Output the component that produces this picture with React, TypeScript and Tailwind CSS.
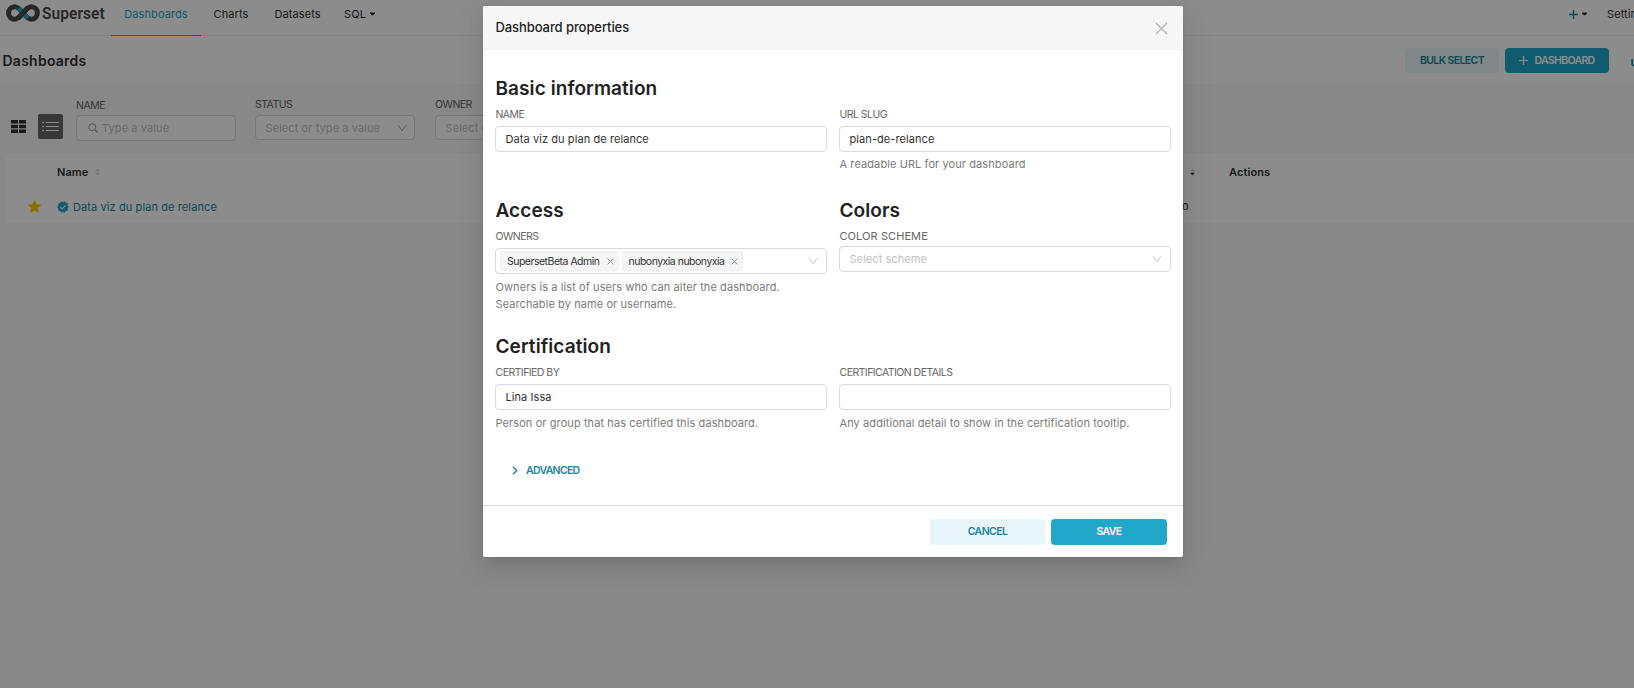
import React from "react";

type Kids = { children?: React.ReactNode };

const Caret = ({ className = "" }: { className?: string }) => (
  <svg width="5" height="4" viewBox="0 0 5 4" className={className}>
    <path d="M0 .5h5v.8L3.2 3.3H1.8L0 1.3z" fill="currentColor" />
  </svg>
);

const Sorter = ({ up, down }: { up: string; down: string }) => (
  <svg width="5" height="8" viewBox="0 0 6 9" className="shrink-0">
    <path d="M3 .7 5.2 3.2H.8z" fill={up} stroke={up} strokeWidth=".6" />
    <path d="M3 8.2 5.2 5.7H.8z" fill={down} stroke={down} strokeWidth=".6" />
  </svg>
);

const ChevronDown = ({ color = "#bfbfbf" }: { color?: string }) => (
  <svg width="10" height="8" viewBox="0 0 10 8" className="shrink-0">
    <path d="M1 1.2 5 6.6 9 1.2" fill="none" stroke={color} strokeWidth="1" />
  </svg>
);

const Logo = () => (
  <svg width="34" height="18" viewBox="0 0 34 18" className="shrink-0">
    <path
      d="M17 9C13.8 5.2 11.6 2.8 8.8 2.8a6.2 6.2 0 0 0 0 12.4C11.6 15.2 13.8 12.8 17 9S22.4 2.8 25.2 2.8a6.2 6.2 0 0 1 0 12.4C22.4 15.2 20.2 12.8 17 9z"
      fill="none"
      stroke="#484848"
      strokeWidth="5"
    />
    <path d="M12.4 4.1 15.4 7.3" stroke="#20a7c9" strokeWidth="5" />
    <path d="M18.6 10.7 21.8 14.1" stroke="#20a7c9" strokeWidth="5" />
    <path d="M12.2 14.2 21.8 3.8" stroke="#484848" strokeWidth="5" />
  </svg>
);

const FilterLabel = ({ children }: Kids) => (
  <div className="h-[14px] text-[10.5px] leading-[16px] tracking-[-0.5px] text-[#666666]">{children}</div>
);

const Label = ({ children }: Kids) => (
  <div className="mt-[4px] h-[20px] pl-[0.5px] text-[10.5px] leading-[17px] tracking-[-0.54px] text-[#666666]">{children}</div>
);

const Heading = ({ children }: Kids) => (
  <h2 className="h-[28px] pl-[0.5px] text-[19px] font-semibold leading-[30px] tracking-[0.08px] text-[#222222]">{children}</h2>
);

const Help = ({ children }: Kids) => (
  <p className="pl-[0.5px] pt-[5px] text-[11px] leading-[17px] tracking-[0.09px] text-[#7a7a7a]">{children}</p>
);

const Field = ({ children }: Kids) => (
  <div className="flex h-[26px] w-full items-center rounded-[4px] border border-[#d9d9e5] bg-white px-[9.5px] text-[11px] tracking-[0.08px] text-[#333333]">
    {children}
  </div>
);

const Tag = ({ children }: Kids) => (
  <span className="flex h-[20px] items-center gap-[7px] rounded-[2px] border border-[#f0f0f0] bg-[#f5f5f5] pl-[6px] pr-[4px] text-[10.5px] tracking-[-0.5px] text-[#333333]">
    <span className="pt-px">{children}</span>
    <svg width="7" height="7" viewBox="0 0 7 7">
      <path d="M.6.6l5.8 5.8M6.4.6.6 6.4" stroke="#808080" strokeWidth=".9" />
    </svg>
  </span>
);

function Background() {
  return (
    <div className="h-full w-[1700px] bg-[#f7f7f7]">
      <nav className="flex h-[36px] border-b border-[#f0f0f0] bg-white text-[11px] leading-[28px] tracking-[0.09px] text-[#333333]">
        <div className="flex h-[26px] w-[111px] items-center pl-[6px]">
          <Logo />
          <span className="ml-[2px] w-[65px] origin-left scale-x-[0.91] font-['Roboto'] text-[17px] font-semibold text-[#484848]">
            Superset
          </span>
        </div>
        <div className="h-[36px] w-[90px] border-b border-[#20a7c9] text-center text-[#20a7c9]">Dashboards</div>
        <div className="ml-[12.5px] w-[50px]">Charts</div>
        <div className="ml-[11px] w-[60px]">Datasets</div>
        <div className="ml-[9.5px] flex h-[28px] w-[34px] items-center gap-[4px]">
          SQL <Caret />
        </div>
        <div className="ml-[1191px] flex h-[28px] items-center gap-[4px]">
          <svg width="9" height="9" viewBox="0 0 9 9">
            <path d="M4.5 0v9M0 4.5h9" stroke="#1a85a0" strokeWidth="1.4" />
          </svg>
          <Caret />
        </div>
        <div className="ml-[20px]">Settings</div>
      </nav>

      <div className="flex h-[48px] bg-white">
        <div className="w-[1405px] pl-[2.5px] text-[14px] font-semibold leading-[50px] tracking-[0.25px] text-[#323232]">
          Dashboards
        </div>
        <div className="mt-[12px] flex h-[25px] w-[94px] items-center justify-center rounded-[4px] bg-[#e9f6f9] text-[10.5px] font-semibold tracking-[-0.6px] text-[#1a85a0]">
          BULK SELECT
        </div>
        <div className="ml-[6px] mt-[12px] flex h-[25px] w-[104px] items-center justify-center gap-[6px] rounded-[4px] bg-[#20a7c9] text-[10.5px] font-semibold tracking-[-0.66px] text-white">
          <svg width="9" height="9" viewBox="0 0 9 9">
            <path d="M4.5 0v9M0 4.5h9" stroke="white" strokeWidth="1.2" />
          </svg>
          DASHBOARD
        </div>
        <svg width="12" height="12" viewBox="0 0 12 12" className="ml-[22px] mt-[22px]">
          <path d="M1.2 1v4.5a2 2 0 0 0 2 2H9" fill="none" stroke="#1a85a0" strokeWidth="1.7" />
        </svg>
      </div>

      <div className="flex h-[70px] pl-[11px]">
        <svg width="15" height="13" viewBox="0 0 15 13" className="mt-[36px] shrink-0">
          <path d="M0 0h7v3.4H0zM8 0h7v3.4H8zM0 4.8h7v3.4H0zM8 4.8h7v3.4H8zM0 9.6h7V13H0zM8 9.6h7V13H8z" fill="#323232" />
        </svg>
        <div className="ml-[12px] mt-[30px] flex size-[25px] items-center justify-center rounded-[2px] bg-[#666666]">
          <svg width="17" height="13" viewBox="0 0 17 13">
            <path d="M3.8 2.5H17M3.8 6.5H17M3.8 10.5H17" stroke="white" strokeWidth="1.1" />
            <path d="M.2 2.5h1.6M.2 6.5h1.6M.2 10.5h1.6" stroke="white" strokeWidth="1.5" />
          </svg>
        </div>
        <div className="ml-[13px] w-[160px] pt-[14px]">
          <FilterLabel>NAME</FilterLabel>
          <div className="mt-[3px] flex h-[26px] items-center rounded-[4px] border border-[#d9d9d9] bg-white pl-[11px] text-[11px] tracking-[0.1px] text-[#bfbfbf]">
            <svg width="10" height="10" viewBox="0 0 10 10" className="mr-[4px]">
              <circle cx="4.2" cy="4.2" r="3.5" fill="none" stroke="#999999" strokeWidth="1" />
              <path d="m6.8 6.8 2.7 2.7" stroke="#999999" strokeWidth="1.1" />
            </svg>
            Type a value
          </div>
        </div>
        <div className="ml-[19px] w-[160px] pt-[13px]">
          <FilterLabel>STATUS</FilterLabel>
          <div className="mt-[4px] flex h-[25px] items-center justify-between rounded-[4px] border border-[#d9d9d9] bg-white pl-[9.5px] pr-[7px] pt-px text-[11px] tracking-[0.08px] text-[#bfbfbf]">
            Select or type a value
            <ChevronDown color="#a6a6a6" />
          </div>
        </div>
        <div className="ml-[20px] w-[160px] pt-[13px]">
          <FilterLabel>OWNER</FilterLabel>
          <div className="mt-[4px] flex h-[25px] items-center rounded-[4px] border border-[#d9d9d9] bg-white pl-[9.5px] pt-px text-[11px] tracking-[0.08px] text-[#bfbfbf]">
            Select or type a value
          </div>
        </div>
      </div>

      <div className="ml-[6px] h-[69px] bg-white text-[11px] tracking-[0.1px] text-[#333333]">
        <div className="flex h-[36px] items-center pl-[51px] font-semibold">
          <div className="flex w-[1133px] items-center gap-[7px]">
            Name <Sorter up="#cccccc" down="#cccccc" />
          </div>
          <div className="flex w-[39px] items-center">
            <Sorter up="#cccccc" down="#222222" />
          </div>
          <div>Actions</div>
        </div>
        <div className="flex h-[33px] items-center pl-[22px]">
          <svg width="13" height="13" viewBox="0 0 24 24" className="mr-[16px]">
            <path d="m12 .5 3.6 7.6 8.2 1-6.1 5.7 1.6 8.3L12 19l-7.3 4.1 1.6-8.3L.2 9.1l8.2-1z" fill="#fcc700" stroke="#fcc700" />
          </svg>
          <svg width="12" height="12" viewBox="0 0 24 24" className="mr-[4px]">
            <path
              d="m23 12-2.44-2.78.34-3.68-3.61-.82-1.89-3.18L12 3 8.6 1.54 6.71 4.72l-3.61.81.34 3.68L1 12l2.44 2.78-.34 3.69 3.61.82 1.89 3.18L12 21l3.4 1.46 1.89-3.18 3.61-.82-.34-3.68z"
              fill="#20a7c9"
              stroke="#20a7c9"
              strokeWidth="1.5"
            />
            <path d="m7 12.2 3.4 3.4 6.6-6.8" fill="none" stroke="white" strokeWidth="2.2" />
          </svg>
          <div className="w-[1100px] pt-px text-[#1a85a0]">Data viz du plan de relance</div>
          <div className="ml-[9px]">o</div>
        </div>
      </div>
    </div>
  );
}

function PropertiesModal() {
  return (
    <section className="ml-[483px] mt-[6px] h-[551px] w-[700px] rounded-[2px] bg-white shadow-[0_3px_6px_-4px_rgba(0,0,0,0.12),0_6px_16px_0_rgba(0,0,0,0.08),0_9px_28px_8px_rgba(0,0,0,0.05)]">
      <header className="flex h-[44px] items-center justify-between rounded-t-[2px] border-b border-[#f0f0f0] bg-[#f7f7f7] pl-[12.5px] pr-[15px]">
        <h1 className="pt-px text-[13px] font-medium tracking-[-0.08px] text-[#222222]">Dashboard properties</h1>
        <svg width="13" height="13" viewBox="0 0 13 13" className="mt-px">
          <path d="m1 1 11 11M12 1 1 12" stroke="#b2b2bf" strokeWidth="1.1" />
        </svg>
      </header>

      <main className="h-[455px] px-[12px] pt-[24px]">
        <div className="grid grid-cols-2 gap-x-[12px]">
          <div className="h-[122px]">
            <Heading>Basic information</Heading>
            <Label>NAME</Label>
            <Field>Data viz du plan de relance</Field>
          </div>
          <div className="h-[122px] pt-[28px]">
            <Label>URL SLUG</Label>
            <Field>plan-de-relance</Field>
            <div className="-mt-px">
              <Help>A readable URL for your dashboard</Help>
            </div>
          </div>

          <div className="h-[136px]">
            <Heading>Access</Heading>
            <Label>OWNERS</Label>
            <div className="flex h-[26px] items-center gap-[3px] rounded-[4px] border border-[#d9d9d9] pl-[4px] pr-[8px]">
              <Tag>SupersetBeta Admin</Tag>
              <Tag>nubonyxia nubonyxia</Tag>
              <span className="grow" />
              <ChevronDown />
            </div>
            <Help>
              Owners is a list of users who can alter the dashboard.
              <br />
              Searchable by name or username.
            </Help>
          </div>
          <div className="h-[136px]">
            <Heading>Colors</Heading>
            <div className="mt-[4px] h-[18px] pl-[0.5px] text-[11px] leading-[17px] tracking-[0.08px] text-[#666666]">COLOR SCHEME</div>
            <div className="flex h-[26px] items-center justify-between rounded-[4px] border border-[#d9d9d9] pl-[9.5px] pr-[8px] text-[11px] tracking-[0.06px] text-[#bfbfbf]">
              Select scheme
              <ChevronDown />
            </div>
          </div>

          <div className="h-[118px]">
            <Heading>Certification</Heading>
            <Label>CERTIFIED BY</Label>
            <Field>Lina Issa</Field>
            <Help>Person or group that has certified this dashboard.</Help>
          </div>
          <div className="h-[118px] pt-[28px]">
            <Label>CERTIFICATION DETAILS</Label>
            <Field />
            <Help>Any additional detail to show in the certification tooltip.</Help>
          </div>
        </div>
        <div className="ml-[17px] mt-[11px] flex h-[18px] items-center gap-[8px] text-[10.5px] font-semibold tracking-[-0.68px] text-[#1a85a0]">
          <svg width="6" height="9" viewBox="0 0 6 9">
            <path d="M1 .8 4.7 4.5 1 8.2" fill="none" stroke="#1a85a0" strokeWidth="1.4" />
          </svg>
          <span className="pt-[2px]">ADVANCED</span>
        </div>
      </main>

      <footer className="flex h-[52px] justify-end gap-[6px] border-t border-[#d9d9e0] pr-[16px] pt-[13px] text-[10.5px] font-semibold tracking-[-0.58px]">
        <button className="h-[26px] w-[115px] rounded-[4px] bg-[#e9f6f9] text-[#1a85a0]">CANCEL</button>
        <button className="h-[26px] w-[116px] rounded-[4px] bg-[#20a7c9] text-white">SAVE</button>
      </footer>
    </section>
  );
}

export default function App() {
  return (
    <div className="relative h-screen w-full overflow-hidden font-['Inter',sans-serif]">
      <Background />
      <div className="absolute inset-0 flex items-start bg-black/45">
        <PropertiesModal />
      </div>
    </div>
  );
}
